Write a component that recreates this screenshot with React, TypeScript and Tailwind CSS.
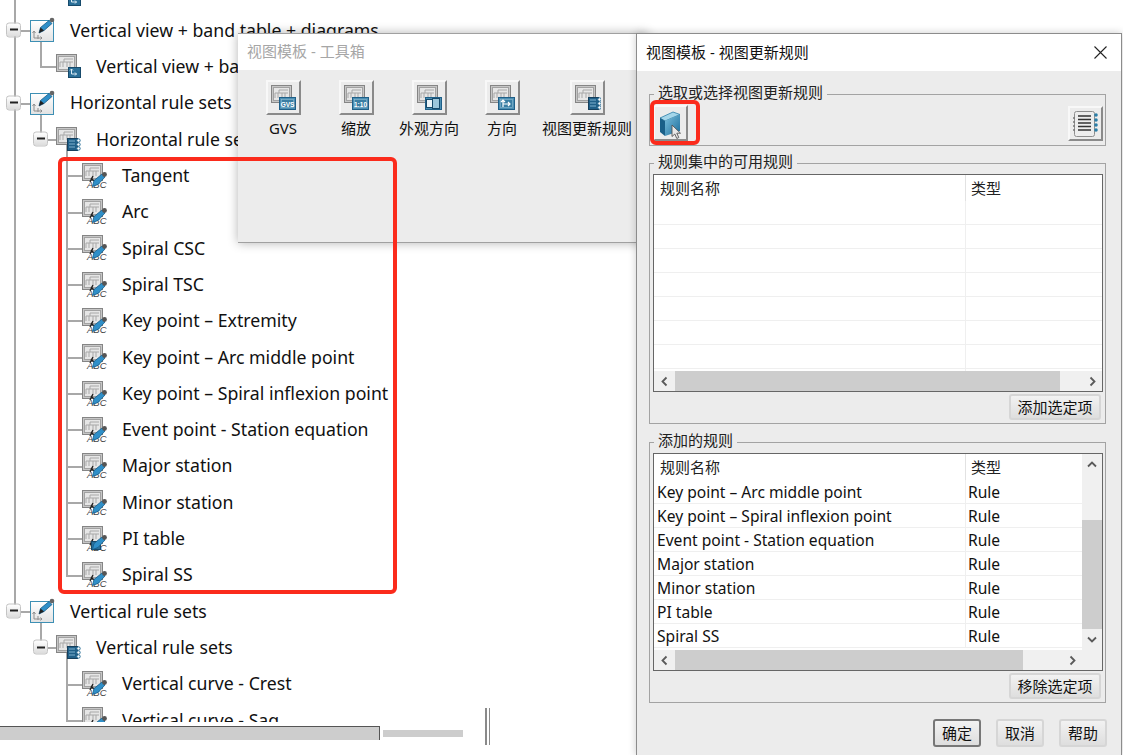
import React from 'react';

const cjk = '"Noto Sans", "Noto Sans CJK SC", sans-serif';

// tree rows, top to bottom
type TreeRow = {
  level: 0 | 1 | 2;
  text: string;
  icon: 'pencil' | 'view' | 'rules' | 'rule' | 'table';
  toggle?: boolean;
  trunk?: 'full' | 'end';
  child?: 'full' | 'end';
};

const rows: TreeRow[] = [
  { level: 1, text: '', icon: 'view', trunk: 'full' },
  { level: 0, text: 'Vertical view + band table + diagrams', icon: 'pencil', toggle: true, trunk: 'full' },
  { level: 1, text: 'Vertical view + band table + diagrams', icon: 'view', trunk: 'full' },
  { level: 0, text: 'Horizontal rule sets', icon: 'pencil', toggle: true, trunk: 'full' },
  { level: 1, text: 'Horizontal rule sets', icon: 'rules', toggle: true, trunk: 'full' },
  { level: 2, text: 'Tangent', icon: 'rule', trunk: 'full', child: 'full' },
  { level: 2, text: 'Arc', icon: 'rule', trunk: 'full', child: 'full' },
  { level: 2, text: 'Spiral CSC', icon: 'rule', trunk: 'full', child: 'full' },
  { level: 2, text: 'Spiral TSC', icon: 'rule', trunk: 'full', child: 'full' },
  { level: 2, text: 'Key point – Extremity', icon: 'rule', trunk: 'full', child: 'full' },
  { level: 2, text: 'Key point – Arc middle point', icon: 'rule', trunk: 'full', child: 'full' },
  { level: 2, text: 'Key point – Spiral inflexion point', icon: 'rule', trunk: 'full', child: 'full' },
  { level: 2, text: 'Event point - Station equation', icon: 'rule', trunk: 'full', child: 'full' },
  { level: 2, text: 'Major station', icon: 'rule', trunk: 'full', child: 'full' },
  { level: 2, text: 'Minor station', icon: 'rule', trunk: 'full', child: 'full' },
  { level: 2, text: 'PI table', icon: 'table', trunk: 'full', child: 'full' },
  { level: 2, text: 'Spiral SS', icon: 'rule', trunk: 'full', child: 'end' },
  { level: 0, text: 'Vertical rule sets', icon: 'pencil', toggle: true, trunk: 'end' },
  { level: 1, text: 'Vertical rule sets', icon: 'rules', toggle: true },
  { level: 2, text: 'Vertical curve - Crest', icon: 'rule', child: 'full' },
  { level: 2, text: 'Vertical curve - Sag', icon: 'rule', child: 'full' },
];

const addedRules = [
  'Key point – Arc middle point',
  'Key point – Spiral inflexion point',
  'Event point - Station equation',
  'Major station',
  'Minor station',
  'PI table',
  'Spiral SS',
];

const tools = [
  { label: 'GVS', badge: 'gvs', width: 'w-[73px]' },
  { label: '缩放', badge: 'scale', width: 'w-[73px]' },
  { label: '外观方向', badge: 'look', width: 'w-[73px]' },
  { label: '方向', badge: 'dir', width: 'w-[73px]' },
  { label: '视图更新规则', badge: 'rules', width: 'w-[97px]' },
];

// grey drawing sheet used by most icons
const Sheet = ({ x = 0, y = 0 }: { x?: number; y?: number }) => (
  <g transform={`translate(${x} ${y})`}>
    <rect x="0.5" y="0.5" width="20" height="17" fill="#c6c6c6" stroke="#858585" />
    <rect x="2.5" y="2.5" width="16" height="13" fill="#e6e6e6" stroke="#a2a2a2" />
    <path d="M4 13V8h4V5h9M8 8h9M7 13V8M11 13V8M14 13V8" fill="none" stroke="#a8a8a8" />
  </g>
);

const RingBadge = ({ x, y }: { x: number; y: number }) => (
  <g>
    <rect x={x + 0.5} y={y + 0.5} width="10" height="12" fill="#1f5f88" stroke="#163f5c" />
    <path d={`M${x + 2} ${y + 3}h6M${x + 2} ${y + 6}h6M${x + 2} ${y + 9}h6`} stroke="#7fb2cf" />
    <g fill="#fff" stroke="#2a6f98">
      <circle cx={x + 11.5} cy={y + 2.5} r="1.7" />
      <circle cx={x + 11.5} cy={y + 6.5} r="1.7" />
      <circle cx={x + 11.5} cy={y + 10.5} r="1.7" />
    </g>
  </g>
);

const TreeIcon = ({ kind }: { kind: TreeRow['icon'] }) => {
  if (kind === 'pencil') {
    return (
      <svg width="25" height="24" viewBox="0 0 25 24" className="overflow-visible">
        <defs>
          <linearGradient id="pencilBox" x1="0" y1="0" x2="0" y2="1">
            <stop offset="0" stopColor="#ffffff" />
            <stop offset="1" stopColor="#e2e2e2" />
          </linearGradient>
        </defs>
        <rect x="0.5" y="2.5" width="23" height="21" fill="url(#pencilBox)" stroke="#3d8fb4" />
        <path d="M4 13v7h8M2.500 15L4 13l1.500 2M10.500 18.500l1.500 1.500l-1.500 1.500M8 17v4" fill="none" stroke="#8d8d8d" />
        <path d="M9 15l1.500-5.500L19 2.500l3 3-8 7z" fill="#2f8fc8" stroke="#175a86" strokeWidth="0.800" />
        <path d="M10.500 9.500L14 12.500L9 15z" fill="#222" />
        <circle cx="22" cy="2" r="2.300" fill="#666" />
      </svg>
    );
  }
  if (kind === 'view') {
    return (
      <svg width="25" height="24" viewBox="0 0 25 24">
        <Sheet />
        <rect x="12.500" y="13.500" width="12" height="10" fill="#2a6f98" stroke="#174a6b" />
        <path d="M15.500 15v5h5M14 16.500l1.500-1.500 1.500 1.500M19 18.500l1.500 1.500-1.500 1.500" fill="none" stroke="#dfeef6" />
      </svg>
    );
  }
  if (kind === 'rules') {
    return (
      <svg width="25" height="24" viewBox="0 0 25 24">
        <Sheet />
        <RingBadge x={11} y={11} />
      </svg>
    );
  }
  return (
    <svg width="25" height="25" viewBox="0 0 25 25" className="overflow-visible">
      <Sheet />
      <text x="5" y="25" fontSize="9.500" fontStyle="italic" fill="#444" fontFamily="Liberation Sans, sans-serif">
        ABC
      </text>
      <path d="M11 13l-3 6M9 15l3 3" fill="none" stroke="#222" strokeWidth="1.400" />
      {kind === 'table' && <rect x="9.500" y="15.500" width="9" height="8" fill="#2a6f98" stroke="#174a6b" />}
      <path d="M10.500 23.500l1.500-6 8-6.500 3 3-7 7.500z" fill="#2f8fc8" stroke="#175a86" strokeWidth="0.800" />
      <circle cx="22.500" cy="11.500" r="2.400" fill="#555" />
    </svg>
  );
};

const Toggle = ({ className }: { className: string }) => (
  <span
    className={`absolute top-1/2 -translate-y-1/2 w-[15px] h-[15px] rounded-[3px] border border-[#c4c4c4] bg-gradient-to-b from-white to-[#dcdcdc] flex items-center justify-center ${className}`}
  >
    <span className="w-[8px] h-[2px] bg-[#222]" />
  </span>
);

const Row = ({ row }: { row: TreeRow }) => {
  const pad = row.level === 0 ? 'pl-[30px]' : row.level === 1 ? 'pl-[56px]' : 'pl-[82px]';
  return (
    <div className={`relative h-[36.32px] flex items-center ${pad}`}>
      {row.trunk === 'full' && <span className="absolute left-[14px] top-0 h-full w-[2px] bg-[#a8a8a8]" />}
      {row.trunk === 'end' && <span className="absolute left-[14px] top-0 h-1/2 w-[2px] bg-[#a8a8a8]" />}
      {row.level === 0 && (
        <>
          <span className="absolute left-[14px] top-1/2 h-[2px] w-[16px] bg-[#a8a8a8]" />
          <span className="absolute left-[40px] top-1/2 h-1/2 w-[2px] bg-[#a8a8a8]" />
        </>
      )}
      {row.level === 1 && (
        <>
          <span className="absolute left-[40px] top-0 h-1/2 w-[2px] bg-[#a8a8a8]" />
          <span className="absolute left-[40px] top-1/2 h-[2px] w-[16px] bg-[#a8a8a8]" />
          {row.toggle && <span className="absolute left-[66px] top-1/2 h-1/2 w-[2px] bg-[#a8a8a8]" />}
        </>
      )}
      {row.level === 2 && (
        <>
          <span className={`absolute left-[66px] top-0 w-[2px] bg-[#a8a8a8] ${row.child === 'end' ? 'h-1/2' : 'h-full'}`} />
          <span className="absolute left-[66px] top-1/2 h-[2px] w-[16px] bg-[#a8a8a8]" />
        </>
      )}
      {row.toggle && <Toggle className={row.level === 0 ? 'left-[6px]' : 'left-[33px]'} />}
      <span className="relative w-[25px] h-[24px] mr-[15px] shrink-0 flex items-center">
        <TreeIcon kind={row.icon} />
      </span>
      <span className="text-[17.700px] text-[#111] whitespace-nowrap">{row.text}</span>
    </div>
  );
};

const ToolBadge = ({ kind }: { kind: string }) => {
  if (kind === 'rules') return <RingBadge x={14} y={13} />;
  return (
    <g>
      <rect x="9.500" y="13.500" width="16" height="12" fill="#4b8fb3" stroke="#1f5f88" />
      <rect x="11.500" y="15.500" width="12" height="8" fill="#3a7ea3" stroke="#8fbdd4" strokeWidth="0.600" />
      {kind === 'gvs' && (
        <text x="17.500" y="22.500" textAnchor="middle" fontSize="6.500" fontWeight="700" fill="#fff" fontFamily="Liberation Sans, sans-serif">
          GVS
        </text>
      )}
      {kind === 'scale' && (
        <text x="17.500" y="22.500" textAnchor="middle" fontSize="6.500" fontWeight="700" fill="#fff" fontFamily="Liberation Sans, sans-serif">
          1:10
        </text>
      )}
      {kind === 'look' && (
        <>
          <rect x="10.500" y="15.500" width="6" height="8" fill="#eaf4f9" stroke="#174a6b" />
          <rect x="16.500" y="14.500" width="7" height="10" fill="#9cc7dc" stroke="#174a6b" />
        </>
      )}
      {kind === 'dir' && (
        <path d="M14 23v-7M12 18l2-2 2 2M14 20h7M19 18l2 2-2 2" fill="none" stroke="#fff" strokeWidth="1.200" />
      )}
    </g>
  );
};

const raised = 'border-2 border-t-[#f8f8f8] border-l-[#f8f8f8] border-r-[#8a8a8a] border-b-[#8a8a8a] bg-[#ececec]';

const Tool = ({ label, badge, width }: { label: string; badge: string; width: string }) => (
  <div className={`${width} flex flex-col items-center shrink-0`}>
    <div className={`w-[35px] h-[35px] ${raised} flex items-center justify-center`}>
      <svg width="27" height="27" viewBox="0 0 27 27">
        <Sheet x={1} y={1} />
        <ToolBadge kind={badge} />
      </svg>
    </div>
    <span className="mt-[2px] text-[15px] leading-[22px] text-[#111] whitespace-nowrap">{label}</span>
  </div>
);

const Chevron = ({ dir }: { dir: 'left' | 'right' | 'up' | 'down' }) => {
  const d = {
    left: 'M6.500 1.500L2.500 5.500L6.500 9.500',
    right: 'M3.500 1.500L7.500 5.500L3.500 9.500',
    up: 'M1 6.500L5 2.500L9 6.500',
    down: 'M1 3.500L5 7.500L9 3.500',
  }[dir];
  return (
    <svg width="10" height="11" viewBox="0 0 10 11">
      <path d={d} fill="none" stroke="#5a5a5a" strokeWidth="1.800" />
    </svg>
  );
};

const HScroll = ({ thumb }: { thumb: string }) => (
  <div className="h-[20px] shrink-0 flex items-center bg-[#f0f0f0]">
    <span className="w-[21px] flex justify-center"><Chevron dir="left" /></span>
    <span className={`${thumb} h-full bg-[#cdcdcd]`} />
    <span className="flex-1" />
    <span className="w-[21px] flex justify-center"><Chevron dir="right" /></span>
  </div>
);

const GridRow = ({ name = '', type = '' }: { name?: string; type?: string }) => (
  <div className="h-[24px] shrink-0 flex border-b border-[#efefef] text-[15.600px] leading-[24px] text-[#111]">
    <span className="w-[312px] pl-[3px] border-r border-[#efefef] whitespace-nowrap">{name}</span>
    <span className="pl-[2px]">{type}</span>
  </div>
);

const GridHeader = () => (
  <div className="h-[26px] shrink-0 flex text-[15px] leading-[26px] text-[#222]">
    <span className="w-[312px] pl-[6px] border-r border-[#e2e2e2]">规则名称</span>
    <span className="pl-[5px]">类型</span>
  </div>
);

const Group = ({ title, children }: { title: string; children: React.ReactNode }) => (
  <fieldset className="border border-[#a3a3a3] pl-[3px] pr-[2px]">
    <legend className="ml-[1px] px-[4px] h-[18px] text-[15px] leading-[14px] text-[#222]">{title}</legend>
    {children}
  </fieldset>
);

const DialogButton = ({ label, dark, wide }: { label: string; dark?: boolean; wide?: boolean }) => (
  <button
    className={`${wide ? 'w-[92px] h-[26px]' : 'w-[48px] h-[28px]'} rounded-[3px] border-2 ${dark ? 'border-[#777]' : 'border-[#d6d6d6]'} bg-gradient-to-b from-[#f2f2f2] to-[#dedede] text-[15px] leading-none text-[#111]`}
  >
    {label}
  </button>
);

const BookIcon = () => (
  <svg width="28" height="30" viewBox="0 0 28 30" className="overflow-visible">
    <defs>
      <linearGradient id="bookFront" x1="0" y1="0" x2="1" y2="1">
        <stop offset="0" stopColor="#7cc0de" />
        <stop offset="1" stopColor="#1b6c9a" />
      </linearGradient>
    </defs>
    <path d="M3 10L16 4l7 2.500L8 13z" fill="#a5d6ea" stroke="#2b7ea8" strokeWidth="0.800" />
    <path d="M3 10l5 3v15l-5-4z" fill="#1a5f88" />
    <path d="M8 13l15-6.500V23L8 28z" fill="url(#bookFront)" />
    <path d="M15 17v11.500l2.800-2.500 2 4.500 2-1-2-4.300h3.700z" fill="#e8e8e8" stroke="#555" strokeWidth="0.900" />
  </svg>
);

const NotebookIcon = () => (
  <svg width="27" height="27" viewBox="0 0 27 27">
    <rect x="2.500" y="1.500" width="20" height="25" rx="2" fill="#ededed" stroke="#8e8e8e" />
    <path d="M6 6h13M6 9.500h13M6 13h13M6 16.500h13M6 20h13" stroke="#333" strokeWidth="1.500" />
    <g fill="#2a7ea8">
      <circle cx="24" cy="5" r="1.800" />
      <circle cx="24" cy="10" r="1.800" />
      <circle cx="24" cy="15" r="1.800" />
      <circle cx="24" cy="20" r="1.800" />
    </g>
    <g fill="#777">
      <circle cx="2" cy="8" r="1" />
      <circle cx="2" cy="12" r="1" />
      <circle cx="2" cy="16" r="1" />
      <circle cx="2" cy="20" r="1" />
    </g>
  </svg>
);

export default function App() {
  return (
    <div className="relative w-[1123px] h-[755px] overflow-hidden bg-white" style={{ fontFamily: cjk }}>
      {/* tree behind the two windows */}
      <div className="h-[722px] overflow-hidden">
        <div className="-mt-[24.500px]">
          {rows.map((row, i) => (
            <Row key={i} row={row} />
          ))}
        </div>
      </div>
      <div className="flex items-center pt-[4px]">
        <div className="w-[380px] h-[14px] bg-[#cdcdcd] border-t border-r border-[#555]" />
        <div className="ml-[3px] w-[80px] h-[7px] bg-[#cdcdcd]" />
      </div>
      <div className="absolute left-[485px] top-[708px] h-[37px] w-[2px] bg-[#8a8a8a]" />
      <div className="absolute left-[489px] top-[708px] h-[37px] w-px bg-[#8a8a8a]" />

      {/* toolbox window */}
      <div className="absolute left-[238px] top-[33px] w-[410px] h-[210px] flex flex-col border-y border-[#a0a0a0] bg-[#ececec] shadow-[0_0_10px_rgba(0,0,0,0.3)]">
        <div className="h-[36px] bg-white pl-[9px] text-[15px] leading-[35px] text-[#a6a6a6]">视图模板 - 工具箱</div>
        <div className="flex pl-[8.500px] pt-[10px]">
          {tools.map((t) => (
            <Tool key={t.label} {...t} />
          ))}
        </div>
      </div>

      {/* update rules dialog */}
      <div className="absolute left-[636px] top-[33px] w-[486px] h-[723px] flex flex-col border border-[#8c8c8c] bg-[#ececec] shadow-[0_0_8px_rgba(0,0,0,0.2)]">
        <div className="h-[37px] shrink-0 bg-white flex items-center justify-between pl-[9px] pr-[14px] text-[15px] text-[#111]">
          <span>视图模板 - 视图更新规则</span>
          <svg width="13" height="13" viewBox="0 0 13 13">
            <path d="M0.500 0.500l12 12M12.500 0.500l-12 12" stroke="#222" strokeWidth="1.100" />
          </svg>
        </div>
        <div className="flex flex-col pl-[12px] pr-[15px] pt-[14px]">
          <Group title="选取或选择视图更新规则">
            <div className="flex justify-between pt-[2px] pb-[4px]">
              <div className={`w-[35px] h-[36px] ${raised} flex items-center justify-center`}>
                <BookIcon />
              </div>
              <div className={`mt-[1px] w-[35px] h-[35px] ${raised} flex items-center justify-center`}>
                <NotebookIcon />
              </div>
            </div>
          </Group>
          <div className="h-[8px]" />
          <Group title="规则集中的可用规则">
            <div className="mt-[2px] w-[450px] h-[218px] flex flex-col border border-[#666] bg-white">
              <div className="flex-1 min-h-0 overflow-hidden flex flex-col">
                <GridHeader />
                {Array.from({ length: 8 }).map((_, i) => (
                  <GridRow key={i} />
                ))}
              </div>
              <HScroll thumb="w-[385px]" />
            </div>
            <div className="flex justify-end pt-[2px] pb-[3px] pr-[2px]">
              <DialogButton label="添加选定项" wide />
            </div>
          </Group>
          <div className="h-[9px]" />
          <Group title="添加的规则">
            <div className="mt-[2px] w-[450px] h-[218px] flex border border-[#666] bg-white">
              <div className="w-[428px] flex flex-col">
                <div className="flex-1 min-h-0 overflow-hidden flex flex-col">
                  <GridHeader />
                  {addedRules.map((r) => (
                    <GridRow key={r} name={r} type="Rule" />
                  ))}
                </div>
                <HScroll thumb="w-[348px]" />
              </div>
              <div className="flex-1 flex flex-col items-center bg-[#f0f0f0]">
                <span className="h-[22px] flex items-center"><Chevron dir="up" /></span>
                <span className="mt-[44px] w-full h-[109px] bg-[#cdcdcd]" />
                <span className="h-[20px] flex items-center"><Chevron dir="down" /></span>
              </div>
            </div>
            <div className="flex justify-end pt-[2px] pb-[3px] pr-[2px]">
              <DialogButton label="移除选定项" wide />
            </div>
          </Group>
          <div className="flex justify-end gap-[15px] mt-[16px] -mr-[1px]">
            <DialogButton label="确定" dark />
            <DialogButton label="取消" />
            <DialogButton label="帮助" />
          </div>
        </div>
      </div>

      {/* red markup drawn over the screenshot */}
      <div className="absolute left-[58px] top-[157px] w-[339px] h-[437px] border-[4px] border-[#fb2b1c] rounded-[6px]" />
      <div className="absolute left-[650px] top-[100px] w-[50px] h-[45px] border-[4px] border-[#fb2b1c] rounded-[6px]" />
    </div>
  );
}
